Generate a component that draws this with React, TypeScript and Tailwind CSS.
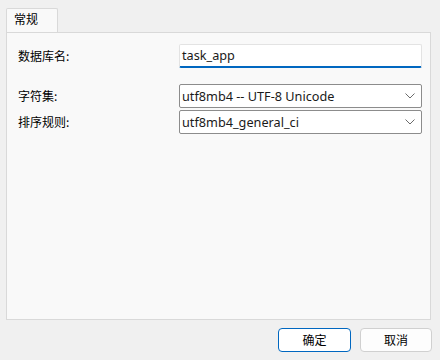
import React from "react";

const cjk = { fontFamily: '"Noto Sans CJK SC", "Noto Sans", sans-serif' };
const latin = { fontFamily: '"Noto Sans", "Noto Sans CJK SC", sans-serif' };

function Chevron() {
  return (
    <svg width="10" height="6" viewBox="0 0 10 6" className="shrink-0">
      <path d="M0.5 0.5 L5 5 L9.5 0.5" fill="none" stroke="#6b6b6b" strokeWidth="1" />
    </svg>
  );
}

function Select({ value }: { value: string }) {
  return (
    <div className="flex h-[24px] w-[243px] items-center justify-between rounded-[2px] border border-[#8c8c8c] bg-white pl-[2px] pr-[6px]">
      <span className="text-[12.7px] leading-none text-[#1a1a1a]" style={latin}>
        {value}
      </span>
      <Chevron />
    </div>
  );
}

export default function App() {
  return (
    <div className="relative flex h-[360px] w-[440px] flex-col bg-[#f0f0f0] pt-[8px]" style={cjk}>
      <div className="flex pl-[6px]">
        <div className="flex h-[25px] w-[52px] items-start rounded-t-[2px] border border-b-0 border-[#d9d9d9] bg-[#f9f9f9] pl-[7px] pt-[4px] text-[12px] leading-none text-black">
          常规
        </div>
      </div>
      <div className="ml-[6px] -mt-px h-[288px] w-[425px] border border-[#d9d9d9] bg-[#f9f9f9] pl-[11px] pt-[11px]">
        <div className="flex items-center">
          <div className="w-[161px] text-[12px] text-black">数据库名:</div>
          <div className="flex h-[24px] w-[243px] items-center rounded-[2px] border border-[#e3e3e3] border-b-2 border-b-[#0067c0] bg-white pl-[2px]">
            <span className="text-[12.7px] leading-none text-[#1a1a1a]" style={latin}>
              task_app
            </span>
          </div>
        </div>
        <div className="mt-[16px] flex items-center">
          <div className="w-[161px] text-[12px] text-black">字符集:</div>
          <Select value="utf8mb4 -- UTF-8 Unicode" />
        </div>
        <div className="mt-[2px] flex items-center">
          <div className="w-[161px] text-[12px] text-black">排序规则:</div>
          <Select value="utf8mb4_general_ci" />
        </div>
      </div>
      <div className="mt-[8px] flex justify-end gap-[9px] pr-[8px]">
        <button className="flex h-[24px] w-[73px] items-center justify-center rounded-[4px] border border-[#0067c0] bg-white text-[12px] leading-none text-black">
          确定
        </button>
        <button className="flex h-[24px] w-[72px] items-center justify-center rounded-[4px] border border-[#d0d0d0] bg-[#fdfdfd] text-[12px] leading-none text-black">
          取消
        </button>
      </div>
    </div>
  );
}
